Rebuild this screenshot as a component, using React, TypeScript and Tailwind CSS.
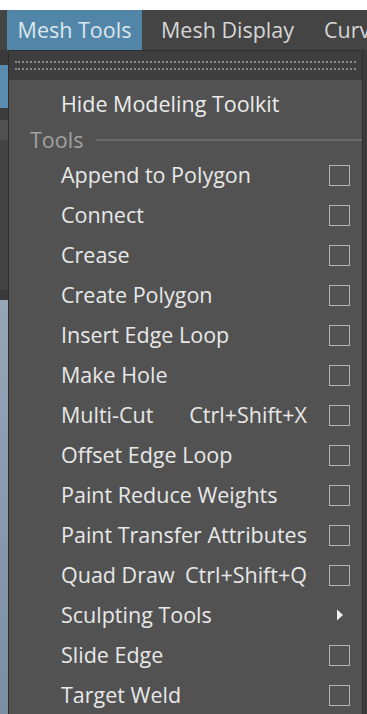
import React from "react";

type Item = {
  label: string;
  shortcut?: string;
  submenu?: boolean;
};

const items: Item[] = [
  { label: "Append to Polygon" },
  { label: "Connect" },
  { label: "Crease" },
  { label: "Create Polygon" },
  { label: "Insert Edge Loop" },
  { label: "Make Hole" },
  { label: "Multi-Cut", shortcut: "Ctrl+Shift+X" },
  { label: "Offset Edge Loop" },
  { label: "Paint Reduce Weights" },
  { label: "Paint Transfer Attributes" },
  { label: "Quad Draw", shortcut: "Ctrl+Shift+Q" },
  { label: "Sculpting Tools", submenu: true },
  { label: "Slide Edge" },
  { label: "Target Weld" },
];

function MenuRow({ item }: { item: Item }) {
  return (
    <div className="flex h-[40px] items-center whitespace-nowrap pl-[52px] pr-[12px]">
      <span className="text-[#e8e8e8]">{item.label}</span>
      <span className="ml-auto text-[#e8e8e8]">{item.shortcut}</span>
      <span className="ml-[22px] flex h-[21px] w-[21px] shrink-0 items-center justify-center">
        {item.submenu ? (
          <svg width="8" height="12" viewBox="0 0 8 12">
            <path d="M1 0.5 L7 6 L1 11.5 Z" fill="#f2f2f2" />
          </svg>
        ) : (
          <span className="h-[21px] w-[21px] border border-[#b4b4b4]" />
        )}
      </span>
    </div>
  );
}

export default function App() {
  return (
    <div
      className="flex h-[714px] w-[367px] flex-col overflow-hidden bg-white text-[21.5px] leading-none"
      style={{ fontFamily: '"Open Sans", "Noto Sans", sans-serif' }}
    >
      <div className="h-[10px] shrink-0 bg-white" />
      {/* menu bar */}
      <div className="flex h-[40px] shrink-0 items-center whitespace-nowrap bg-[#444444] text-[#d6d6d6]">
        <div className="ml-[7px] flex h-full w-[135px] shrink-0 items-center justify-center bg-[#5286a8] text-[#dce7ef]">
          Mesh Tools
        </div>
        <div className="ml-[19px] shrink-0">Mesh Display</div>
        <div className="ml-[30px] shrink-0">Curves</div>
      </div>
      <div className="flex min-h-0 flex-1">
        {/* background app strip on the left */}
        <div className="flex w-[8px] shrink-0 flex-col">
          <div className="h-[15px] bg-[#3a3a3a]" />
          <div className="h-[43px] bg-[#5a8cb2]" />
          <div className="h-[12px] bg-[#3c3c3c]" />
          <div className="h-[20px] bg-[#505050]" />
          <div className="h-[150px] bg-[#434343]" />
          <div className="h-[10px] bg-[#3a3a3a]" />
          <div className="flex-1 bg-gradient-to-b from-[#95a6b8] to-[#7a8ea4]" />
        </div>
        {/* dropdown panel */}
        <div className="flex flex-1 flex-col border-l border-t border-[#2e2e2e] bg-[#525252]">
          <div className="flex h-[29px] shrink-0 flex-col justify-center gap-[5px] bg-[#3e3e3e] px-[6px]">
            <div className="h-[2px] border-t-2 border-dotted border-[#8a8a8a]" />
            <div className="h-[2px] border-t-2 border-dotted border-[#8a8a8a]" />
          </div>
          <div className="flex h-[48px] shrink-0 items-center whitespace-nowrap pl-[52px] text-[#ececec]">
            Hide Modeling Toolkit
          </div>
          <div className="flex h-[24px] shrink-0 items-center pl-[21px] text-[#a2a2a2]">
            <span>Tools</span>
            <span className="ml-[13px] h-[2px] flex-1 bg-[#6c6c6c]" />
          </div>
          <div className="pt-[3px]">
            {items.map((item) => (
              <MenuRow key={item.label} item={item} />
            ))}
          </div>
        </div>
        <div className="w-[5px] shrink-0 border-l border-[#2e2e2e] bg-[#3b3b3b]" />
      </div>
    </div>
  );
}
